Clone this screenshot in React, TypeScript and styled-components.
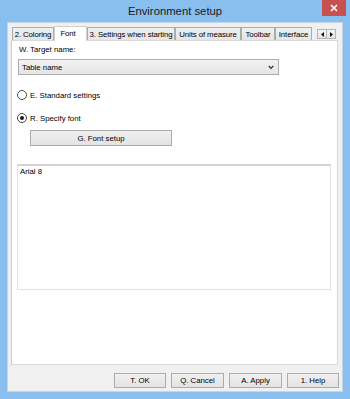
import React from 'react';
import styled, { createGlobalStyle } from 'styled-components';

const Global = createGlobalStyle`
  html, body { margin: 0; padding: 0; background: #ffffff; }
  body { font-family: 'Liberation Sans', Arial, sans-serif; color: #000; }
  * { box-sizing: border-box; }
`;

const Window = styled.div`
  width: 350px;
  height: 399px;
  background: #88bfef;
  display: flex;
  flex-direction: column;
`;

const TitleBar = styled.div`
  height: 22px;
  display: grid;
  grid-template-columns: 1fr auto 1fr;
`;

const Title = styled.div`
  grid-column: 2;
  font-size: 11.3px;
  line-height: 22px;
  color: #1a1a1a;
`;

const CloseButton = styled.div`
  grid-column: 3;
  justify-self: end;
  align-self: start;
  margin-right: 4px;
  width: 24px;
  height: 16px;
  background: #c75050;
  display: flex;
  align-items: center;
  justify-content: center;
`;

const Frame = styled.div`
  flex: 1;
  display: flex;
  padding: 0 7px 7px;
`;

const Client = styled.div`
  flex: 1;
  background: #f0f0f0;
  border: 1px solid #c6d5e4;
  display: flex;
  flex-direction: column;
  padding: 3px 3px 3px 3px;
  font-size: 7.8px;
`;

const TabStrip = styled.div`
  height: 14px;
  display: flex;
  align-items: flex-end;
  padding-left: 1px;
  position: relative;
  z-index: 1;
`;

const Tab = styled.div<{ $w: number; $active?: boolean }>`
  width: ${(p) => p.$w}px;
  height: ${(p) => (p.$active ? 15 : 13)}px;
  margin-bottom: ${(p) => (p.$active ? -1 : 0)}px;
  border: 1px solid ${(p) => (p.$active ? '#d0d0d0' : '#acacac')};
  border-bottom: none;
  background: ${(p) => (p.$active ? '#ffffff' : 'linear-gradient(#f0f0f0, #e5e5e5)')};
  display: flex;
  align-items: center;
  justify-content: center;
  padding-bottom: ${(p) => (p.$active ? 2 : 0)}px;
  padding-right: ${(p) => (p.$active ? 5 : 0)}px;
  white-space: nowrap;
  letter-spacing: -0.1px;
  color: #000;
`;

const ScrollArrows = styled.div`
  display: flex;
  margin-left: 5px;
  align-self: flex-start;
  margin-top: 3px;
`;

const ScrollButton = styled.div`
  width: 10px;
  height: 10px;
  border: 1px solid #b5b5b5;
  background: linear-gradient(#f4f4f4, #e6e6e6);
  display: flex;
  align-items: center;
  justify-content: center;
  & + & { margin-left: -1px; }
`;

const Panel = styled.div`
  flex: 1;
  margin-right: 1px;
  background: #ffffff;
  border: 1px solid #d9d9d9;
  border-left-color: #cfcfcf;
  display: flex;
  flex-direction: column;
  padding: 4px 6px 0 6px;
`;

const Label = styled.div`
  line-height: 10px;
  padding-left: 1px;
`;

const Select = styled.div`
  margin-top: 4px;
  width: 261px;
  height: 16px;
  border: 1px solid #acacac;
  background: linear-gradient(#f2f2f2, #e5e5e5);
  display: flex;
  align-items: center;
  justify-content: space-between;
  padding: 0 4px 0 3px;
`;

const RadioRow = styled.div<{ $mt: number }>`
  margin-top: ${(p) => p.$mt}px;
  margin-left: -1px;
  height: 10px;
  display: flex;
  align-items: center;
  gap: 3px;
`;

const RadioCircle = styled.div<{ $checked?: boolean }>`
  width: 10px;
  height: 10px;
  border-radius: 50%;
  border: 1px solid #4a4a4a;
  background: #ffffff;
  display: flex;
  align-items: center;
  justify-content: center;
  &::after {
    content: '';
    display: ${(p) => (p.$checked ? 'block' : 'none')};
    width: 4px;
    height: 4px;
    border-radius: 50%;
    background: #1a1a1a;
  }
`;

const Button = styled.div<{ $w: number }>`
  width: ${(p) => p.$w}px;
  height: 16px;
  border: 1px solid #acacac;
  background: linear-gradient(#f0f0f0, #e3e3e3);
  display: flex;
  align-items: center;
  justify-content: center;
  white-space: nowrap;
`;

const FontButtonWrap = styled.div`
  margin-top: 7px;
  margin-left: 12px;
`;

const TextBox = styled.div`
  margin-top: 18px;
  margin-left: -1px;
  width: 314px;
  height: 126px;
  border: 1px solid #e1e1e1;
  border-top: 2px solid #d4d4d4;
  background: #ffffff;
  padding: 1px 2px;
  line-height: 10px;
`;

const ButtonRow = styled.div`
  margin-top: 8px;
  height: 15px;
  display: flex;
  justify-content: flex-end;
  gap: 5px;
  & > div { height: 15px; }
`;

const tabs = [
  { label: '2. Coloring', w: 42 },
  { label: 'Font', w: 33, active: true },
  { label: '3. Settings when starting', w: 88 },
  { label: 'Units of measure', w: 66 },
  { label: 'Toolbar', w: 34 },
  { label: 'Interface', w: 37 },
];

export default function App() {
  return (
    <>
      <Global />
      <Window>
        <TitleBar>
          <Title>Environment setup</Title>
          <CloseButton>
            <svg width="8" height="8" viewBox="0 0 8 8">
              <path d="M1 1 L7 7 M7 1 L1 7" stroke="#fff" strokeWidth="1.6" />
            </svg>
          </CloseButton>
        </TitleBar>
        <Frame>
          <Client>
            <TabStrip>
              {tabs.map((t) => (
                <Tab key={t.label} $w={t.w} $active={t.active}>
                  {t.label}
                </Tab>
              ))}
              <ScrollArrows>
                <ScrollButton>
                  <svg width="3" height="5" viewBox="0 0 3 5">
                    <polygon points="3,0 0,2.5 3,5" fill="#111" />
                  </svg>
                </ScrollButton>
                <ScrollButton>
                  <svg width="3" height="5" viewBox="0 0 3 5">
                    <polygon points="0,0 3,2.5 0,5" fill="#111" />
                  </svg>
                </ScrollButton>
              </ScrollArrows>
            </TabStrip>
            <Panel>
              <Label>W. Target name:</Label>
              <Select>
                <span>Table name</span>
                <svg width="6" height="5" viewBox="0 0 6 5">
                  <path d="M0.8 1 L3 3.4 L5.2 1" stroke="#333" strokeWidth="1.3" fill="none" />
                </svg>
              </Select>
              <RadioRow $mt={15}>
                <RadioCircle />
                <span>E. Standard settings</span>
              </RadioRow>
              <RadioRow $mt={13}>
                <RadioCircle $checked />
                <span>R. Specify font</span>
              </RadioRow>
              <FontButtonWrap>
                <Button $w={142}>G. Font setup</Button>
              </FontButtonWrap>
              <TextBox>Arial 8</TextBox>
            </Panel>
            <ButtonRow>
              <Button $w={52}>T. OK</Button>
              <Button $w={53}>Q. Cancel</Button>
              <Button $w={53}>A. Apply</Button>
              <Button $w={52}>1. Help</Button>
            </ButtonRow>
          </Client>
        </Frame>
      </Window>
    </>
  );
}
